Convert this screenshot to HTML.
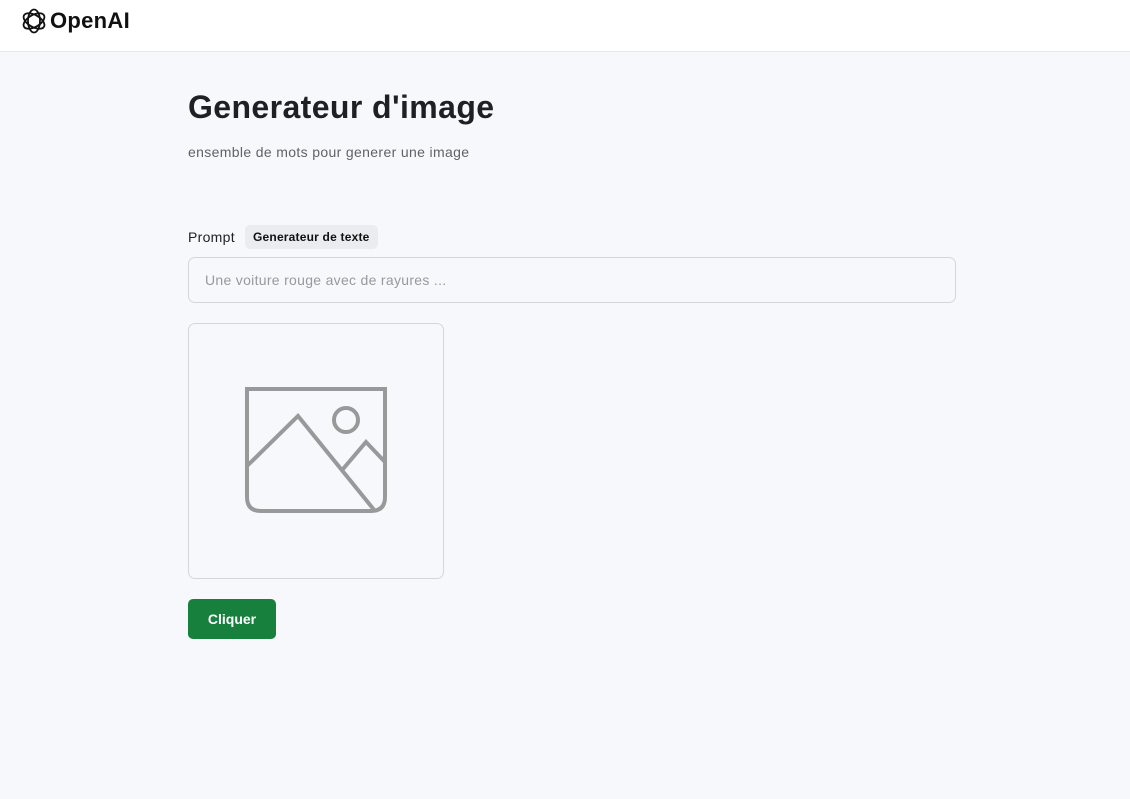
<!DOCTYPE html>
<html><head><style>
body{margin:0;width:1130px;height:799px;background:#f7f8fb;font-family:"Liberation Sans",sans-serif;overflow:hidden;position:relative}
.hdr{position:absolute;left:0;top:0;width:1130px;height:51px;background:#fff;border-bottom:1px solid #e6e7ea}
.logo{position:absolute;left:20px;top:7px;display:flex;align-items:center;gap:2px;font-size:22px;font-weight:bold;color:#111;letter-spacing:0.3px}
h1{position:absolute;left:188px;top:89px;margin:0;font-size:32px;font-weight:bold;color:#1f2023;letter-spacing:0.4px}
.sub{position:absolute;left:188px;top:144px;font-size:14px;color:#5f6368;letter-spacing:0.35px}
.lbl{position:absolute;left:188px;top:229px;font-size:14px;color:#222;letter-spacing:0.3px}
.tag{position:absolute;left:245px;top:225px;height:24px;line-height:24px;padding:0 8px;background:#ebecef;border-radius:5px;font-size:12px;font-weight:bold;color:#111;letter-spacing:0.2px}
.inp{position:absolute;left:188px;top:257px;width:768px;height:46px;border:1px solid #d4d6da;border-radius:7px;background:#f7f8fb;box-sizing:border-box;padding-left:16px;line-height:44px;font-size:14px;color:#999;letter-spacing:0.3px}
.img{position:absolute;left:188px;top:323px;width:256px;height:256px;border:1px solid #d4d6da;border-radius:7px;box-sizing:border-box}
.btn{position:absolute;left:188px;top:599px;width:88px;height:40px;background:#17803d;border-radius:5px;color:#fff;font-size:14px;font-weight:bold;text-align:center;line-height:40px}
</style></head><body>
<div class="hdr"><div class="logo"><svg width="28" height="28" viewBox="0 0 28 28" fill="none" stroke="#111" stroke-width="1.8"><g transform="translate(14 14)"><ellipse rx="6" ry="11.5" transform="rotate(0)"/><ellipse rx="6" ry="11.5" transform="rotate(60)"/><ellipse rx="6" ry="11.5" transform="rotate(120)"/></g></svg>OpenAI</div></div>
<h1>Generateur d'image</h1>
<div class="sub">ensemble de mots pour generer une image</div>
<div class="lbl">Prompt</div>
<div class="tag">Generateur de texte</div>
<div class="inp">Une voiture rouge avec de rayures ...</div>
<div class="img"><svg width="256" height="256" style="position:absolute;left:-1px;top:-1px" fill="none" stroke="#999" stroke-width="4"><path d="M59 66H197V174Q197 188 183 188H73Q59 188 59 174Z"/><circle cx="158" cy="97" r="12"/><path d="M59 143L110 93L187 188M155 146L178 119L197 139"/></svg></div>
<div class="btn">Cliquer</div>
</body></html>
